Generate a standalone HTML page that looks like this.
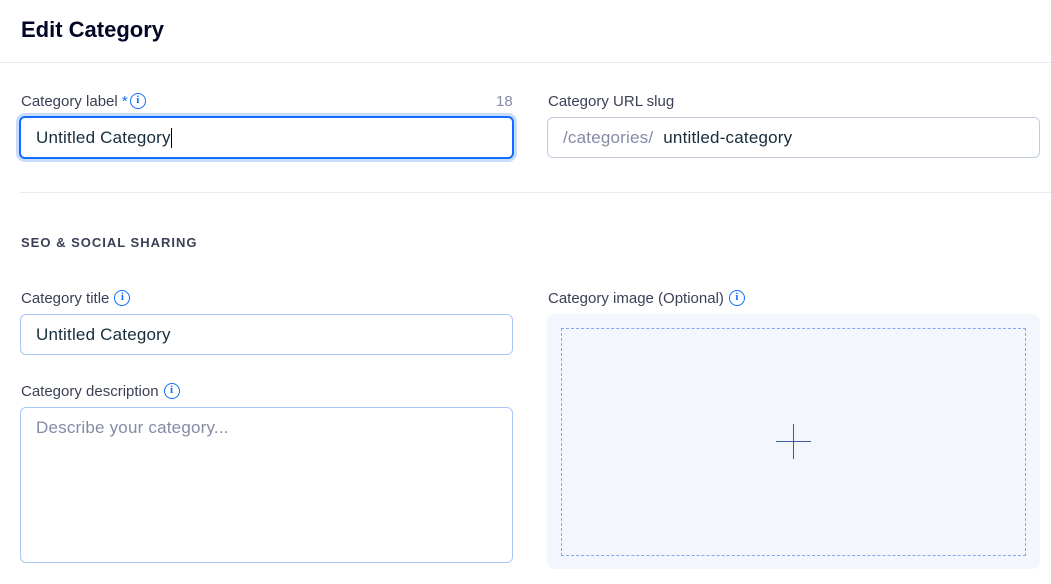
<!DOCTYPE html>
<html><head><style>
*{box-sizing:border-box;margin:0;padding:0}
body{width:1051px;height:584px;background:#fff;font-family:"Liberation Sans",sans-serif;color:#162d3d;position:relative;overflow:hidden}
.a{position:absolute}
.lbl{font-size:15px;color:#3b4057;display:flex;align-items:center;height:18px}
.inp{border:1px solid #a8c6fa;border-radius:6px;background:#fff;font-size:17px;color:#162d3d;padding-left:15px;display:flex;align-items:center;letter-spacing:0.2px}
.i{display:inline-block;width:16px;height:16px;border:1.5px solid #116dff;border-radius:50%;color:#116dff;font-size:11px;font-weight:bold;text-align:center;line-height:13px;margin-left:5px;font-family:"Liberation Serif",serif}
</style></head><body>
<div class="a" style="left:21px;top:17px;font-size:22px;font-weight:bold;color:#000624">Edit Category</div>
<div class="a" style="left:0;top:62px;width:1051px;height:1px;background:#e6e9ef"></div>
<div class="a lbl" style="left:21px;top:92px">Category label&nbsp;<span style="color:#116dff">*</span><span class="i" style="margin-left:2px">i</span></div>
<div class="a lbl" style="left:496px;top:92px;color:#868aa5">18</div>
<div class="a inp" style="left:19px;top:116px;width:495px;height:43px;border:2px solid #116dff;box-shadow:0 0 0 3px #c9dcfd">Untitled Category<span style="display:inline-block;width:1px;height:20px;background:#000"></span></div>
<div class="a lbl" style="left:548px;top:92px">Category URL slug</div>
<div class="a inp" style="left:547px;top:117px;width:493px;height:41px;border-color:#c1cbe0"><span style="color:#868aa5">/categories/</span><span style="margin-left:10px">untitled-category</span></div>
<div class="a" style="left:20px;top:192px;width:1031px;height:1px;background:#e6e9ef"></div>
<div class="a" style="left:21px;top:235px;font-size:13px;font-weight:bold;letter-spacing:1px;color:#3b4057">SEO &amp; SOCIAL SHARING</div>
<div class="a lbl" style="left:21px;top:289px">Category title<span class="i">i</span></div>
<div class="a inp" style="left:20px;top:314px;width:493px;height:41px">Untitled Category</div>
<div class="a lbl" style="left:21px;top:382px">Category description<span class="i">i</span></div>
<div class="a inp" style="left:20px;top:407px;width:493px;height:156px;align-items:flex-start;padding-top:10px;color:#868aa5">Describe your category...</div>
<div class="a lbl" style="left:548px;top:289px">Category image (Optional)<span class="i">i</span></div>
<div class="a" style="left:547px;top:314px;width:493px;height:255px;background:#f3f6fd;border-radius:8px"></div>
<div class="a" style="left:561px;top:328px;width:465px;height:228px;border:1px dashed #7fa8f5"></div>
<div class="a" style="left:776px;top:441px;width:35px;height:1px;background:#3d5a9e"></div>
<div class="a" style="left:793px;top:424px;width:1px;height:35px;background:#3d5a9e"></div>
</body></html>
